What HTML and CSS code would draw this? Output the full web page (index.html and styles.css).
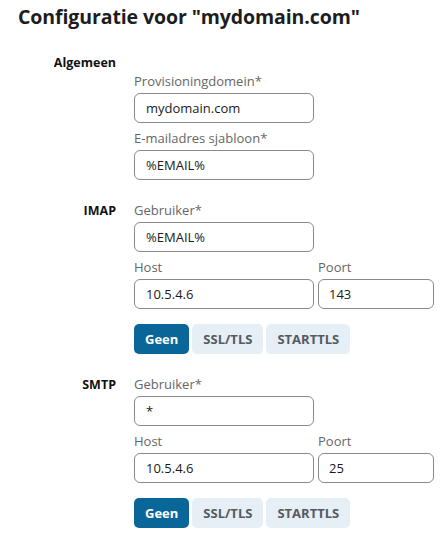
FILE: index.html
```html
<!DOCTYPE html>
<html lang="nl">
<head>
<meta charset="utf-8">
<title>Configuratie</title>
<link rel="stylesheet" href="styles.css">
</head>
<body>
<div class="page">
  <h1 class="title">Configuratie voor "mydomain.com"</h1>

  <section class="group group-stacked">
    <h2 class="group-name">Algemeen</h2>
    <div class="fields">
      <div class="field">
        <label class="field-label">Provisioningdomein*</label>
        <div class="input input-wide">mydomain.com</div>
      </div>
      <div class="field">
        <label class="field-label">E-mailadres sjabloon*</label>
        <div class="input input-wide">%EMAIL%</div>
      </div>
    </div>
  </section>

  <section class="group">
    <h2 class="group-name">IMAP</h2>
    <div class="fields">
      <div class="field">
        <label class="field-label">Gebruiker*</label>
        <div class="input input-wide">%EMAIL%</div>
      </div>
      <div class="field-row">
        <div class="field">
          <label class="field-label">Host</label>
          <div class="input input-wide">10.5.4.6</div>
        </div>
        <div class="field">
          <label class="field-label">Poort</label>
          <div class="input input-port">143</div>
        </div>
      </div>
      <div class="segmented">
        <button class="seg seg-active">Geen</button>
        <button class="seg">SSL/TLS</button>
        <button class="seg">STARTTLS</button>
      </div>
    </div>
  </section>

  <section class="group">
    <h2 class="group-name">SMTP</h2>
    <div class="fields">
      <div class="field">
        <label class="field-label">Gebruiker*</label>
        <div class="input input-wide">*</div>
      </div>
      <div class="field-row">
        <div class="field">
          <label class="field-label">Host</label>
          <div class="input input-wide">10.5.4.6</div>
        </div>
        <div class="field">
          <label class="field-label">Poort</label>
          <div class="input input-port">25</div>
        </div>
      </div>
      <div class="segmented">
        <button class="seg seg-active">Geen</button>
        <button class="seg">SSL/TLS</button>
        <button class="seg">STARTTLS</button>
      </div>
    </div>
  </section>
</div>
</body>
</html>
```

FILE: styles.css
```css
html, body {
  margin: 0;
  padding: 0;
  background: #ffffff;
}

body {
  font-family: "Open Sans", "Noto Sans", sans-serif;
  color: #1a1a1a;
}

.page {
  padding: 2px 0 0 18px;
}

.title {
  margin: 0;
  font-size: 19.5px;
  line-height: 30px;
  font-weight: 700;
  color: #1d1d1d;
  letter-spacing: -0.1px;
}

.group {
  display: grid;
  grid-template-columns: 98px auto;
  column-gap: 18px;
  align-items: start;
  margin-top: 21px;
}

.group-stacked {
  grid-template-rows: auto auto;
}

.group-stacked .group-name {
  grid-column: 1;
  grid-row: 1;
}

.group-stacked .fields {
  grid-column: 2;
  grid-row: 2;
}

.group-name {
  margin: 0;
  font-size: 12.5px;
  line-height: 19px;
  font-weight: 700;
  color: #111;
  text-align: right;
}

.fields {
  display: flex;
  flex-direction: column;
  gap: 6px;
}

.field {
  display: flex;
  flex-direction: column;
  gap: 2px;
}

.field-label {
  font-size: 13px;
  line-height: 19px;
  color: #666666;
}

.field-row {
  display: flex;
  gap: 4px;
}

.input {
  box-sizing: border-box;
  height: 30px;
  border: 1px solid #8a8a8a;
  border-radius: 6px;
  padding: 0 11px;
  font-size: 13px;
  line-height: 28px;
  color: #1a1a1a;
  background: #fff;
}

.input-wide {
  width: 180px;
}

.input-port {
  width: 116px;
  padding-left: 10px;
}

.segmented {
  display: flex;
  gap: 3px;
  margin-top: 9px;
}

.seg {
  font-family: inherit;
  height: 30px;
  padding: 0 11px;
  border: none;
  border-radius: 5px;
  background: #e6eef6;
  color: #555a60;
  font-size: 13px;
  font-weight: 700;
  cursor: pointer;
}

.seg-active {
  background: #0a6699;
  color: #ffffff;
}
```
